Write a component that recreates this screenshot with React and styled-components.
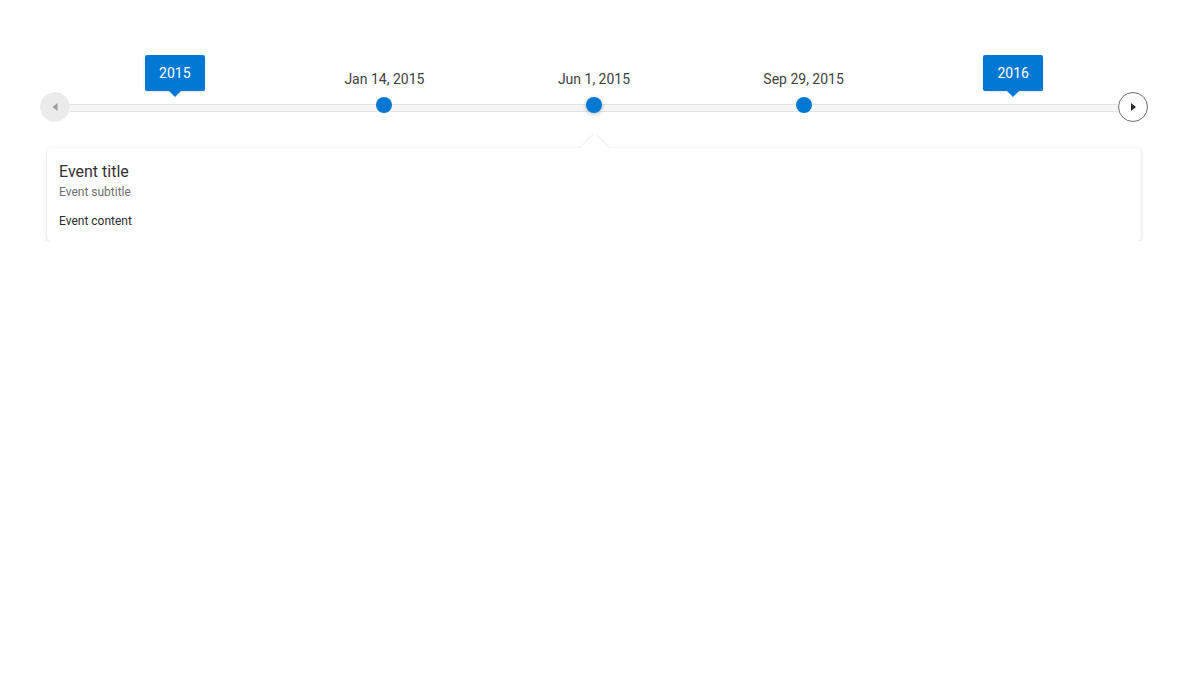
import React from "react";
import styled, { createGlobalStyle } from "styled-components";

const GlobalStyle = createGlobalStyle`
  html, body { margin: 0; padding: 0; background: #ffffff; }
  body { font-family: Roboto, "Noto Sans", "Liberation Sans", sans-serif; color: #424242; }
  * { box-sizing: border-box; }
`;

const BLUE = "#0078d4";

const Page = styled.div`
  width: 1108px;
  margin: 55px 0 0 40px;
`;

const Bar = styled.div`
  display: flex;
  align-items: flex-end;
  height: 67px;
`;

const NavButton = styled.button`
  flex: 0 0 30px;
  width: 30px;
  height: 30px;
  padding: 0;
  border-radius: 50%;
  display: flex;
  align-items: center;
  justify-content: center;
  cursor: pointer;
  position: relative;
  z-index: 1;
  border: ${(p) => (p.$disabled ? "1px solid #ebebeb" : "1px solid #6f6f6f")};
  background: ${(p) => (p.$disabled ? "#ebebeb" : "#ffffff")};
  color: ${(p) => (p.$disabled ? "#9e9e9e" : "#2b2b2b")};
`;

const Track = styled.div`
  flex: 1 1 auto;
  height: 67px;
  position: relative;
  display: grid;
  grid-template-columns: repeat(5, 1fr);

  &::before {
    content: "";
    position: absolute;
    left: 0;
    right: 0;
    top: 49px;
    height: 6px;
    background: #f6f6f6;
    border-top: 1px solid #e3e3e3;
    border-bottom: 1px solid #e3e3e3;
  }
`;

const Item = styled.div`
  display: flex;
  flex-direction: column;
  align-items: center;
  position: relative;
  z-index: 1;
`;

const LabelArea = styled.div`
  height: 42px;
  display: flex;
  align-items: flex-end;
  justify-content: center;
`;

const Flag = styled.div`
  position: relative;
  width: 60px;
  height: 36px;
  margin-bottom: 6px;
  background: ${BLUE};
  color: #ffffff;
  border-radius: 2px;
  font-size: 14px;
  line-height: 36px;
  text-align: center;
  box-shadow: 0 1px 3px rgba(0, 0, 0, 0.12);

  &::after {
    content: "";
    position: absolute;
    left: 50%;
    bottom: -6px;
    margin-left: -6px;
    border-left: 6px solid transparent;
    border-right: 6px solid transparent;
    border-top: 6px solid ${BLUE};
  }
`;

const DateLabel = styled.div`
  font-size: 14px;
  line-height: 20px;
  margin-bottom: 8px;
  color: #424242;
  white-space: nowrap;
`;

const Dot = styled.div`
  width: 16px;
  height: 16px;
  border-radius: 50%;
  background: ${BLUE};
  box-shadow: ${(p) => (p.$selected ? "0 1px 4px rgba(0, 0, 0, 0.28)" : "none")};
  visibility: ${(p) => (p.$hidden ? "hidden" : "visible")};
`;

const Card = styled.div`
  position: relative;
  margin: 26px 7px 0 7px;
  padding: 13px 12px 12px 12px;
  background: #ffffff;
  border-radius: 4px;
  box-shadow: 0 2px 4px rgba(0, 0, 0, 0.12), 0 0 2px rgba(0, 0, 0, 0.08);
`;

const Callout = styled.div`
  position: absolute;
  top: -15px;
  left: ${(p) => p.$x - 15}px;
  width: 30px;
  height: 15px;
  overflow: hidden;

  &::before {
    content: "";
    position: absolute;
    left: 4.5px;
    top: 4.5px;
    width: 21px;
    height: 21px;
    background: #ffffff;
    transform: rotate(45deg);
    box-shadow: 0 0 3px rgba(0, 0, 0, 0.12);
  }
`;

const Title = styled.div`
  font-size: 16px;
  line-height: 22px;
  color: #333333;
`;

const Subtitle = styled.div`
  margin-top: 1px;
  font-size: 12px;
  line-height: 16px;
  color: #707070;
`;

const Content = styled.div`
  margin-top: 13px;
  font-size: 12px;
  line-height: 16px;
  color: #2b2b2b;
`;

const Arrow = ({ dir }) => (
  <svg width="10" height="10" viewBox="0 0 10 10" aria-hidden="true">
    {dir === "left" ? (
      <path d="M7.5 1 L2.5 5 L7.5 9 Z" fill="currentColor" />
    ) : (
      <path d="M3 1 L8 5 L3 9 Z" fill="currentColor" />
    )}
  </svg>
);

const items = [
  { type: "flag", text: "2015" },
  { type: "date", text: "Jan 14, 2015" },
  { type: "date", text: "Jun 1, 2015", selected: true },
  { type: "date", text: "Sep 29, 2015" },
  { type: "flag", text: "2016" },
];

export default function App() {
  return (
    <>
      <GlobalStyle />
      <Page>
        <Bar>
          <NavButton $disabled aria-label="Previous">
            <Arrow dir="left" />
          </NavButton>
          <Track>
            {items.map((it) => (
              <Item key={it.text}>
                <LabelArea>
                  {it.type === "flag" ? (
                    <Flag>{it.text}</Flag>
                  ) : (
                    <DateLabel>{it.text}</DateLabel>
                  )}
                </LabelArea>
                <Dot $hidden={it.type === "flag"} $selected={it.selected} />
              </Item>
            ))}
          </Track>
          <NavButton aria-label="Next">
            <Arrow dir="right" />
          </NavButton>
        </Bar>
        <Card>
          <Callout $x={547} />
          <Title>Event title</Title>
          <Subtitle>Event subtitle</Subtitle>
          <Content>Event content</Content>
        </Card>
      </Page>
    </>
  );
}
